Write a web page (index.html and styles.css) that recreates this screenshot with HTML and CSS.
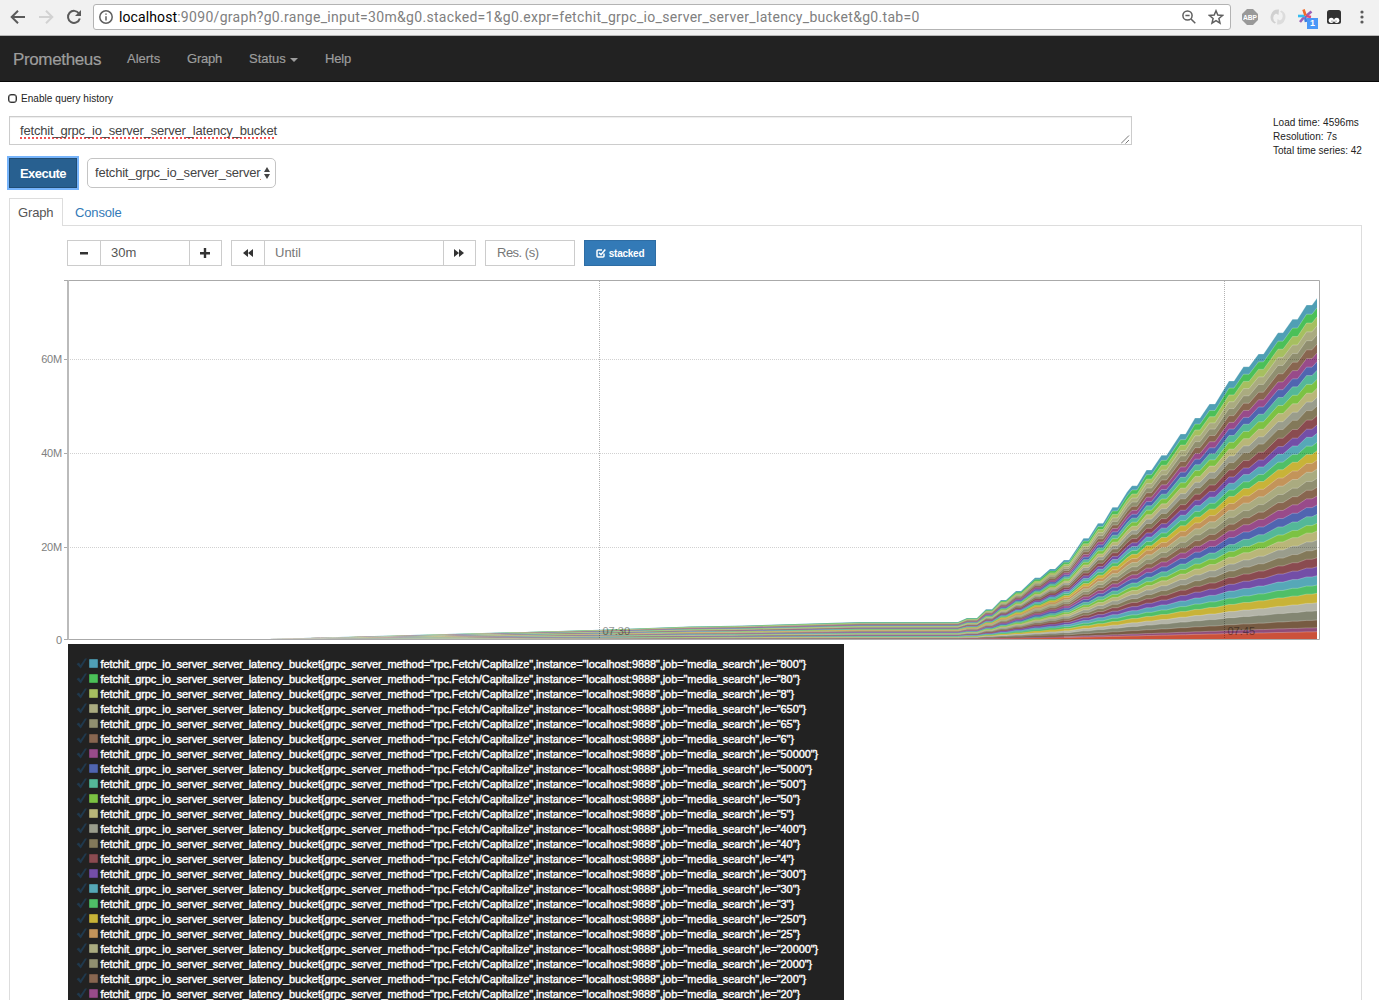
FILE: index.html
```
<!DOCTYPE html>
<html lang="en">

<head>
    <meta charset="UTF-8">
    <title>Prometheus Time Series Collection and Processing Server</title>
    <link rel="stylesheet" href="styles.css">
</head>

<body>
    <div class="browser">
        <svg class="nav-icon" viewBox="0 0 16 16"><path d="M15 8H2M8 1.7L1.7 8L8 14.3"/></svg>
        <svg class="nav-icon disabled" viewBox="0 0 16 16"><path d="M1 8h13M8 1.7L14.3 8L8 14.3"/></svg>
        <svg class="nav-icon" viewBox="0 0 16 16"><path d="M13 4.5A6 6 0 1 0 13.8 9.5"/><path class="solid" d="M15 1v6H9z"/></svg>
        <div class="address">
            <svg class="info" viewBox="0 0 14 14"><circle cx="7" cy="7" r="6.2"/><path d="M7 6.2v4.3M7 3.4v1.4"/></svg>
            <span class="url"><b>localhost</b>:9090/graph?g0.range_input=30m&amp;g0.stacked=1&amp;g0.expr=fetchit_grpc_io_server_server_latency_bucket&amp;g0.tab=0</span>
            <svg class="lens" viewBox="0 0 14 14"><circle cx="5.5" cy="5.5" r="4.6"/><path d="M9 9l4.3 4.3M3.4 5.5h4.2"/></svg>
            <svg class="star" viewBox="0 0 16 16"><path d="M8 1.8l1.8 4.3 4.7.4-3.6 3 1.1 4.6L8 11.7l-4 2.4 1.1-4.6-3.6-3 4.7-.4z"/></svg>
        </div>
        <div class="extensions">
            <svg width="16" height="16" viewBox="0 0 16 16"><path fill="#999" d="M5 0h6l5 5v6l-5 5H5l-5-5V5z"/><text class="abp" x="8" y="10.7" text-anchor="middle" textLength="14" lengthAdjust="spacingAndGlyphs">ABP</text></svg>
            <svg class="swirl" width="16" height="16" viewBox="0 0 16 16"><path fill="#d0d0d0" d="M9 .5A7.5 7.5 0 0 0 4.5 14.5l1.5-1A5 5 0 0 1 6 4.5l2.500 1.500z"/><path fill="#dcdcdc" d="M7 15.500A7.500 7.500 0 0 0 11.500 1.500l-1.500 1a5 5 0 0 1 0 9l-2.500-1.500z"/></svg>
            <div class="ext-badge">
                <svg width="16" height="16" viewBox="0 0 16 16"><g fill="none" stroke-width="2.6"><path stroke="#9a62b5" d="M13.5 2.5L8 7"/><path stroke="#e2467b" d="M8 7l5 1"/><path stroke="#3b7de0" d="M7 7l1 6"/><path stroke="#9a62b5" d="M2 13l5-6"/><path stroke="#35bdf0" d="M0 7h7"/><path stroke="#f26b2c" d="M5.5 .5l2 6"/></g></svg>
                <span>1</span>
            </div>
            <svg class="tamper" width="14" height="14" viewBox="0 0 14 14"><rect width="14" height="14" rx="2.5" fill="#333"/><circle cx="4.3" cy="10.3" r="2.6" fill="#fff"/><circle cx="9.7" cy="10.3" r="2.6" fill="#fff"/><circle cx="5" cy="11" r=".6" fill="#333"/><circle cx="9" cy="11" r=".6" fill="#333"/></svg>
            <svg width="4" height="14" viewBox="0 0 4 14" fill="#5a5a5a"><circle cx="2" cy="2" r="1.6"/><circle cx="2" cy="7" r="1.6"/><circle cx="2" cy="12" r="1.6"/></svg>
        </div>
    </div>

    <nav class="navbar">
        <a class="brand">Prometheus</a>
        <a class="alerts">Alerts</a>
        <a class="graph">Graph</a>
        <a class="status">Status <i class="caret"></i></a>
        <a class="help">Help</a>
    </nav>

    <div class="container">
        <label class="history"><span class="checkbox"></span>Enable query history</label>

        <div class="query">
            <div class="expression">
                <span>fetchit_grpc_io_server_server_latency_bucket</span>
                <svg class="grip" width="9" height="9" viewBox="0 0 9 9"><path d="M0 8.5L8 .5M4.5 8.5L8 5"/></svg>
            </div>
            <div class="stats">
                <div class="load">Load time: 4596ms</div>
                <div class="resolution">Resolution: 7s</div>
                <div>Total time series: 42</div>
            </div>
        </div>

        <div class="actions">
            <button class="execute">Execute</button>
            <div class="metric">
                <span>fetchit_grpc_io_server_server_</span>
                <svg width="6" height="12" viewBox="0 0 6 12"><path d="M0 5l3-5 3 5zM0 7h6l-3 5z"/></svg>
            </div>
        </div>

        <div class="tabs">
            <a class="tab active">Graph</a>
            <a class="tab">Console</a>
        </div>

        <div class="pane">
            <div class="controls">
                <div class="group">
                    <button class="btn"><svg width="10" height="10" viewBox="0 0 10 10"><path d="M1 4h8v2.5H1z"/></svg></button>
                    <div class="field range">30m</div>
                    <button class="btn plus"><svg width="10" height="10" viewBox="0 0 10 10"><path d="M0 4h3.8V0h2.4v4H10v2.4H6.2V10H3.8V6.4H0z"/></svg></button>
                </div>
                <div class="group">
                    <button class="btn"><svg width="10" height="8" viewBox="0 0 10 8"><path d="M5 0v8L0 4zM10 0v8L5 4z"/></svg></button>
                    <div class="field until">Until</div>
                    <button class="btn plus"><svg width="10" height="8" viewBox="0 0 10 8"><path d="M0 0l5 4-5 4zM5 0l5 4-5 4z"/></svg></button>
                </div>
                <div class="field res">Res. (s)</div>
                <button class="stacked">
                    <svg width="10" height="10" viewBox="0 0 10 10"><path d="M8 5.5V8a1 1 0 0 1-1 1H2a1 1 0 0 1-1-1V3a1 1 0 0 1 1-1h4M3 4.7l2 2L9.3 1.5"/></svg>
                    stacked
                </button>
            </div>

            <div class="chart">
                <div class="y-axis">
                    <span class="y60">60M</span>
                    <span class="y40">40M</span>
                    <span class="y20">20M</span>
                    <span class="y0">0</span>
                </div>
                <svg id="plot" width="1257" height="360" viewBox="63 280 1257 360"></svg>
            </div>

            <div id="legend" class="legend"></div>
        </div>
    </div>

    <script src="graph.js"></script>
</body>

</html>
```
FILE: styles.css
```
* {
    box-sizing: border-box;
}

body {
    margin: 0;
    height: 1000px;
    overflow: hidden;
    background: #fff;
    color: #333;
    font-family: "Liberation Sans", Arial, sans-serif;
    font-size: 13px;
}

button {
    font-family: inherit;
    padding: 0;
}

.browser {
    display: flex;
    align-items: center;
    height: 36px;
    padding: 0 15px 2px 10px;
    background: #f1f1f1;
    border-bottom: 1px solid #b6b6b6;
}

.nav-icon {
    width: 16px;
    height: 16px;
    margin-right: 12px;
    fill: none;
    stroke: #5a5a5a;
    stroke-width: 2;
}

.nav-icon.disabled {
    stroke: #d2d2d2;
}

.nav-icon .solid {
    fill: #5a5a5a;
    stroke: none;
}

.address {
    display: flex;
    align-items: center;
    width: 1138px;
    height: 26px;
    margin-left: -1px;
    padding: 0 6px 0 5px;
    background: #fff;
    border: 1px solid #b3b3b3;
    border-radius: 3px;
}

.address svg {
    flex: none;
    width: 14px;
    height: 14px;
    fill: none;
    stroke: #5f5f5f;
    stroke-width: 1.5;
}

.url {
    flex: 1;
    margin-left: 6px;
    font-family: Roboto, sans-serif;
    font-size: 14px;
    letter-spacing: .31px;
    color: #808080;
    white-space: nowrap;
}

.url b {
    font-weight: 400;
    letter-spacing: .1px;
    color: #000;
}

.address .star {
    width: 16px;
    height: 16px;
    margin-left: 12px;
}

.address .lens {
    margin-right: 1px;
}

.address .lens + .star {
    margin-left: 11px;
}

.extensions {
    display: flex;
    flex: 1;
    align-items: center;
    margin-left: 11px;
}

.swirl {
    margin-left: 12px;
}

.abp {
    font-size: 7px;
    font-weight: 700;
    fill: #fff;
}

.ext-badge {
    position: relative;
    height: 16px;
    margin: 0 13px 0 12px;
}

.ext-badge span {
    position: absolute;
    left: 9px;
    top: 9px;
    width: 11px;
    height: 11px;
    background: #4a97f7;
    color: #fff;
    font-size: 9px;
    font-weight: 700;
    line-height: 11px;
    text-align: center;
}

.tamper {
    margin-right: auto;
}

.navbar {
    display: flex;
    height: 46px;
    padding-left: 13px;
    background: #222;
    border-bottom: 1px solid #080808;
    color: #9d9d9d;
    line-height: 45px;
    -webkit-text-stroke: .2px #9d9d9d;
}

.brand {
    width: 114px;
    font-size: 17px;
    line-height: 47px;
    letter-spacing: -.36px;
}

.alerts {
    width: 60px;
}

.graph {
    width: 62px;
    letter-spacing: -.2px;
}

.status {
    width: 76px;
}

.caret {
    display: inline-block;
    margin-left: 1px;
    vertical-align: middle;
    border: 4px solid transparent;
    border-top-color: #9d9d9d;
    border-bottom: 0;
}

.help {
    letter-spacing: -.2px;
}

.container {
    padding: 10px 17px 0 9px;
}

.history {
    display: flex;
    align-items: center;
    height: 13px;
    font-size: 10px;
    letter-spacing: .05px;
    color: #222;
}

.checkbox {
    width: 9px;
    height: 9px;
    margin-right: 4px;
    margin-left: -1px;
    border: 1px solid #333;
    border-radius: 3px;
    box-shadow: inset 0 0 0 .5px #555;
}

.query {
    display: flex;
    justify-content: space-between;
    height: 29px;
    margin-top: 11px;
}

.expression {
    display: flex;
    justify-content: space-between;
    width: 1123px;
    height: 29px;
    padding: 0 1px 0 10px;
    border: 1px solid #ccc;
    box-shadow: inset 0 1px 1px rgba(0, 0, 0, .075);
    line-height: 27px;
    letter-spacing: -.19px;
    color: #444;
}

.expression span {
    text-decoration: underline dotted #f05050 1.5px;
    text-underline-offset: 2px;
    text-decoration-skip-ink: none;
}

.grip {
    align-self: flex-end;
    fill: none;
    stroke: #777;
}

.stats {
    width: 89px;
    font-size: 10px;
    line-height: 14px;
    color: #222;
    white-space: nowrap;
}

.load,
.resolution {
    letter-spacing: .05px;
}

.actions {
    display: flex;
    height: 30px;
    margin-top: 13px;
}

.execute {
    width: 68px;
    background: #286090;
    border: 1px solid #204d74;
    box-shadow: 0 0 0 2px #76b4fb;
    color: #fff;
    font-size: 13px;
    font-weight: 700;
    letter-spacing: -.55px;
}

.metric {
    display: flex;
    align-items: center;
    justify-content: space-between;
    width: 189px;
    height: 30px;
    margin-left: 10px;
    padding: 0 5px 0 7px;
    border: 1px solid #c4c4c4;
    border-radius: 5px;
    color: #444;
}

.metric span {
    width: 166px;
    line-height: 20px;
    letter-spacing: -.2px;
    overflow: hidden;
    white-space: nowrap;
}

.metric svg {
    flex: none;
    fill: #444;
}

.tabs {
    display: flex;
    height: 28px;
    margin-top: 10px;
    border-bottom: 1px solid #ddd;
    line-height: 29px;
}

.tab {
    padding: 0 12px;
    color: #337ab7;
    letter-spacing: -.15px;
}

.tab.active {
    width: 54px;
    height: 28px;
    padding: 0 8px;
    background: #fff;
    border: 1px solid #ddd;
    border-bottom: 0;
    line-height: 27px;
    color: #555;
}

.pane {
    height: 790px;
    padding: 14px 0 0 57px;
    border: 1px solid #ddd;
    border-width: 0 1px;
}

.controls {
    display: flex;
    height: 26px;
}

.group {
    display: flex;
    margin-right: 9px;
}

.btn {
    display: flex;
    align-items: center;
    justify-content: center;
    width: 34px;
    height: 26px;
    background: #fff;
    border: 1px solid #ccc;
    fill: #333;
}

.btn.plus {
    width: 33px;
    padding-right: 1px;
}

.field {
    height: 26px;
    padding-left: 11px;
    border: 1px solid #ccc;
    line-height: 24px;
    color: #555;
}

.range {
    width: 90px;
    margin: 0 -1px;
    padding-left: 10px;
}

.until {
    width: 180px;
    margin: 0 -1px;
    padding-left: 10px;
    color: #777;
}

.res {
    width: 90px;
    color: #777;
    letter-spacing: -.5px;
}

.stacked {
    display: flex;
    align-items: center;
    justify-content: center;
    gap: 3px;
    width: 72px;
    margin-left: 9px;
    background: #337ab7;
    border: 1px solid #2e6da4;
    color: #fff;
    font-size: 10px;
    font-weight: 700;
    letter-spacing: -.25px;
}

.stacked svg {
    fill: none;
    stroke: #fff;
    stroke-width: 1.5;
}

.chart {
    display: flex;
    margin-top: 14px;
    margin-left: -37px;
}

.y-axis {
    display: flex;
    flex-direction: column;
    width: 33px;
    height: 360px;
    padding: 72px 1px 0 0;
    font-size: 11px;
    line-height: 14px;
    letter-spacing: -.2px;
    text-align: right;
    color: #808080;
}

.y60,
.y40,
.y20 {
    margin-bottom: 80px;
}

.y20 {
    margin-bottom: 79px;
}

#plot {
    display: block;
}

.tick {
    font-size: 11px;
    fill: #000;
    opacity: .42;
}

.legend {
    width: 776px;
    height: 370px;
    margin: 4px 0 0 1px;
    padding: 12px 8px 0;
    background: #222;
    color: #fff;
}

.line {
    display: flex;
    align-items: center;
    height: 15px;
    white-space: nowrap;
    font-size: 11px;
}

.check {
    width: 11px;
    height: 11px;
    fill: #20394d;
}

.swatch {
    width: 9px;
    height: 9px;
    margin: 0 2.5px 1px 2px;
    border: 1px solid rgba(0, 0, 0, .15);
    border-radius: 1px;
}

.label {
    letter-spacing: -.092px;
    -webkit-text-stroke: .4px #fff;
}
```
FILE: graph.js
```
const colors = {
    cyan: "#509fb5", green: "#4bc058", lime: "#a6bf60", khaki: "#aaab80",
    olive: "#908f70", brown: "#886650", magenta: "#984b8a", blue: "#5065b0",
    teal: "#54b898", grass: "#7cc243", sand: "#b9b679", gray: "#9a9d8c",
    moss: "#83795a", maroon: "#8a4b50", purple: "#734ea7", sky: "#56a8b7",
    leaf: "#4fbf67", gold: "#c8b338", orange: "#c3945a", silver: "#b4b5a8",
    slate: "#838672", wood: "#775b42", plum: "#8f4c78", red: "#cb513a"
};

// series from the top of the stack down, with the height of its upper edge at the last sample
const series = [
    ["cyan", 298.3], ["green", 307.7], ["lime", 316.7], ["khaki", 325.7],
    ["olive", 334.7], ["brown", 344], ["magenta", 353], ["blue", 361.7],
    ["teal", 370.3], ["grass", 379.3], ["sand", 388.3], ["gray", 397.3],
    ["moss", 406], ["maroon", 415.7], ["purple", 425], ["sky", 433.3],
    ["leaf", 442.3], ["gold", 450.7], ["orange", 460], ["khaki", 469],
    ["olive", 478.3], ["brown", 487.3], ["magenta", 496], ["blue", 505],
    ["teal", 514.3], ["grass", 523.3], ["sand", 531], ["gray", 540],
    ["moss", 549], ["maroon", 557.7], ["purple", 566.7], ["sky", 575.7],
    ["leaf", 585], ["gold", 593.3], ["silver", 602.7], ["slate", 610.7],
    ["wood", 620], ["plum", 627.7], ["red", 631.7]
];

const total = [
    [68, 639.3], [260, 639.3], [320, 637.6], [500, 632.6], [600, 629.8], [690, 626.5], [735, 625.8], [860, 622], [958, 622],
    [967, 618], [977, 618], [986, 609.3], [992, 609.3], [1001, 600], [1006, 600],
    [1016, 591], [1021, 591], [1035, 577.7], [1040, 577.7], [1050, 569], [1055, 569],
    [1064, 560], [1069, 560], [1083.5, 538.3], [1088.5, 538.3], [1098, 523.3], [1103, 523.3],
    [1112.5, 507.3], [1117.5, 507.3], [1127, 492], [1132, 485.7], [1137, 485.7], [1146.5, 470], [1151.5, 470],
    [1161.5, 455.3], [1166.5, 455.3], [1180.5, 434], [1185.5, 434], [1195, 418], [1200, 418],
    [1209.5, 404], [1215, 404], [1229, 381], [1234, 381], [1243.5, 366.7], [1249, 366.7],
    [1258.5, 354], [1263.5, 354], [1278, 332.7], [1283, 332.7], [1292.5, 319.3], [1297.5, 319.3],
    [1306.5, 305], [1312, 305], [1317, 298.3]
];

const base = 639.3;

function edge(top, from = 0, to = 1317) {
    const share = (base - top) / (base - 298.3);
    return total.filter(([x]) => x >= from && x <= to)
        .map(([x, y]) => x + "," + (base - share * (base - y)).toFixed(2)).join(" ");
}

let svg = '<rect x="67" y="280" width="1253" height="360" fill="#fff"/>';
series.forEach(([name, top]) => {
    svg += `<polygon points="${edge(top)} 1317,640 68,640" fill="${colors[name]}"/>`;
    // thinner outline where the bands are narrow
    svg += `<polyline points="${edge(top, 0, 1064)}" fill="none" stroke="#fff" stroke-opacity=".11"/>`;
    svg += `<polyline points="${edge(top, 1064)}" fill="none" stroke="#fff" stroke-opacity=".25"/>`;
});

[359.5, 453.5, 547.5].forEach(y => {
    svg += `<path d="M68 ${y}H1319" stroke="#000" stroke-opacity=".18" stroke-dasharray="1 1"/>`;
    svg += `<path d="M64 ${y}H68" stroke="#aaa"/>`;
});
[[599.5, "07:30"], [1224.5, "07:45"]].forEach(([x, time]) => {
    svg += `<path d="M${x} 281V640" stroke="#000" stroke-opacity=".3" stroke-dasharray="1 1"/>`;
    svg += `<text class="tick" x="${x + 3}" y="635">${time}</text>`;
});
svg += '<path d="M67.5 280.5H1319.5V639.5H67.5z" fill="none" stroke="#aaa"/>';
svg += '<path d="M68 280V640" stroke="#bbb" stroke-width="2"/>';
svg += '<path d="M64 280.5H68M64 639.5H68" stroke="#aaa"/>';
document.getElementById("plot").innerHTML = svg;

const buckets = [
    "800", "80", "8", "650", "65", "6", "50000", "5000", "500", "50", "5", "400",
    "40", "4", "300", "30", "3", "250", "25", "20000", "2000", "200", "20"
];

document.getElementById("legend").innerHTML = buckets.map((le, i) => `
    <div class="line">
        <svg class="check" viewBox="0 0 11 11"><path d="M.5 6l2.5-1.5L4.5 7 9 .5h2L4.8 10.5z"/></svg>
        <span class="swatch" style="background:${colors[series[i][0]]}"></span>
        <span class="label">fetchit_grpc_io_server_server_latency_bucket{grpc_server_method="rpc.Fetch/Capitalize",instance="localhost:9888",job="media_search",le="${le}"}</span>
    </div>`).join("");
```
